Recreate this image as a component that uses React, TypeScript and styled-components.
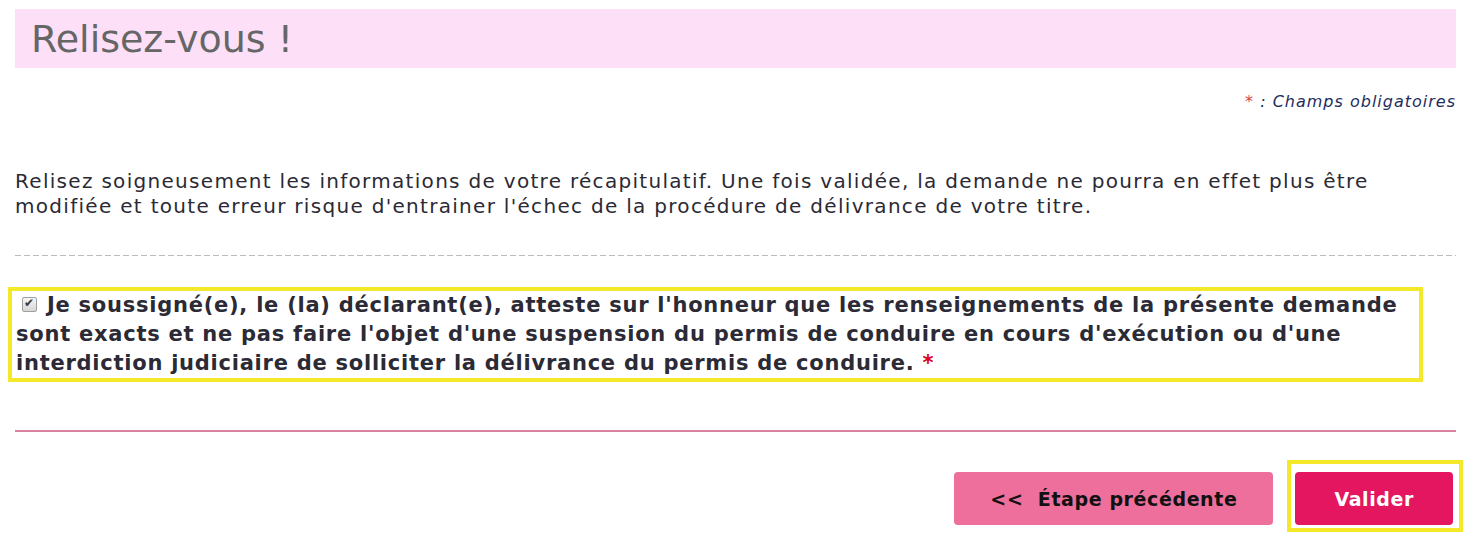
import React from 'react';
import styled, { createGlobalStyle } from 'styled-components';

const GlobalStyle = createGlobalStyle`
  body {
    margin: 0;
    background: #fff;
    font-family: 'DejaVu Sans', Verdana, sans-serif;
  }
`;

const Page = styled.div`
  padding: 9px 17px 0 15px;
`;

const TitleBar = styled.div`
  background: #fde0f8;
  height: 59px;
  display: flex;
  align-items: center;
  padding-left: 16px;
`;

const Title = styled.h1`
  margin: 0;
  font-weight: normal;
  font-size: 38px;
  color: #666;
`;

const RequiredNote = styled.div`
  text-align: right;
  font-style: italic;
  font-size: 16px;
  letter-spacing: 1px;
  color: #1f2d5c;
  margin-top: 24px;
`;

const Star = styled.span<{ $bold?: boolean }>`
  color: ${p => (p.$bold ? '#e0001b' : '#d9464b')};
  font-style: normal;
`;

const Intro = styled.p`
  margin: 58px 0 0;
  font-size: 20px;
  letter-spacing: 1.3px;
  line-height: 25px;
  color: #2b2a35;
`;

const Dashed = styled.div`
  height: 1px;
  margin-top: 36px;
  background: repeating-linear-gradient(90deg, #bbb 0 6px, transparent 6px 9px);
`;

const Attestation = styled.label`
  display: block;
  margin: 31px 33px 0 -7px;
  border: 4px solid #f3e82a;
  padding: 0 4px;
  font-weight: bold;
  font-size: 21px;
  letter-spacing: 0.75px;
  line-height: 29px;
  color: #2b2a35;
`;

const Check = styled.input`
  appearance: none;
  position: relative;
  width: 15px;
  height: 15px;
  margin: 0 10px 0 6px;
  vertical-align: 0;
  border: 1px solid #a0a0a0;
  border-radius: 2px;
  background: linear-gradient(#f6f6f6, #d6d6d6);

  &:checked::after {
    content: '✔';
    position: absolute;
    left: 1px;
    top: -2px;
    font-size: 12px;
    letter-spacing: 0;
    color: #3a3a3a;
  }
`;

const PinkRule = styled.div`
  height: 2px;
  margin-top: 48px;
  background: #d9819f;
`;

const Actions = styled.div`
  display: flex;
  justify-content: flex-end;
  align-items: flex-end;
  gap: 14px;
  margin-top: 28px;
  margin-right: -7px;
`;

const Button = styled.button<{ $primary?: boolean }>`
  height: 53px;
  border: none;
  border-radius: 4px;
  font-family: 'DejaVu Sans', Verdana, sans-serif;
  font-weight: bold;
  font-size: 19px;
  letter-spacing: 0.6px;
  background: ${p => (p.$primary ? '#e3165f' : '#ee6e9c')};
  color: ${p => (p.$primary ? '#fff' : '#111')};
  padding: 0 ${p => (p.$primary ? '39px' : '36px')};
  margin-bottom: ${p => (p.$primary ? '0' : '7px')};
  cursor: pointer;
`;

const Highlight = styled.div`
  border: 4px solid #f3e82a;
  padding: 8px 6px 3px 4px;
`;

export default function App() {
  return (
    <>
      <GlobalStyle />
      <Page>
        <TitleBar>
          <Title>Relisez-vous !</Title>
        </TitleBar>
        <RequiredNote>
          <Star>*</Star> : Champs obligatoires
        </RequiredNote>
        <Intro>
          Relisez soigneusement les informations de votre récapitulatif. Une fois validée, la demande ne pourra en effet plus être
          modifiée et toute erreur risque d'entrainer l'échec de la procédure de délivrance de votre titre.
        </Intro>
        <Dashed />
        <Attestation>
          <Check type="checkbox" defaultChecked />
          Je soussigné(e), le (la) déclarant(e), atteste sur l'honneur que les renseignements de la présente demande sont exacts et ne pas faire l'objet d'une suspension du permis de conduire en cours d'exécution ou d'une interdiction judiciaire de solliciter la délivrance du permis de conduire. <Star $bold>*</Star>
        </Attestation>
        <PinkRule />
        <Actions>
          <Button>{'<<'}&nbsp; Étape précédente</Button>
          <Highlight>
            <Button $primary>Valider</Button>
          </Highlight>
        </Actions>
      </Page>
    </>
  );
}
